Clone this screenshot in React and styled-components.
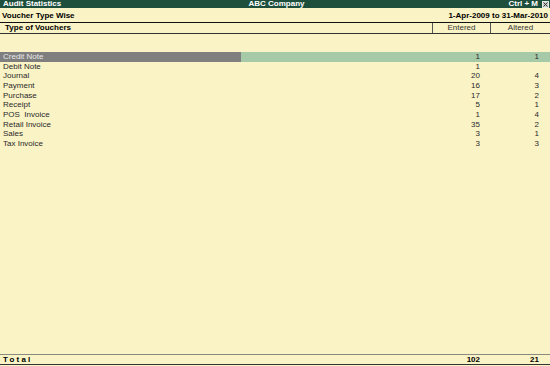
import styled, { createGlobalStyle } from "styled-components";

const GlobalStyle = createGlobalStyle`
  html, body {
    margin: 0;
    padding: 0;
    background: #faf3c6;
  }
  body {
    font-family: "Liberation Sans", Arial, sans-serif;
  }
`;

const Screen = styled.div`
  width: 550px;
  height: 366px;
  display: flex;
  flex-direction: column;
  background: #faf3c6;
  color: #222;
  overflow: hidden;
`;

const TitleBar = styled.div`
  height: 8px;
  display: grid;
  grid-template-columns: 1fr auto 1fr;
  align-items: center;
  background: #1e4e3c;
  color: #fff;
  font-size: 8px;
  font-weight: bold;
  line-height: 8px;
  padding-left: 3px;

  & .right {
    display: flex;
    justify-content: flex-end;
    align-items: center;
    gap: 4px;
  }
`;

const CloseBox = styled.span`
  width: 7px;
  height: 7px;
  margin-right: 1px;
  background: #c8cfc8;
  border: 1px solid #e8ece8;
  box-sizing: border-box;
  display: flex;
  align-items: center;
  justify-content: center;
`;

const SubTitle = styled.div`
  height: 14px;
  display: flex;
  justify-content: space-between;
  align-items: center;
  padding: 0 2px 0 2px;
  font-size: 8px;
  font-weight: bold;
  color: #000;
  border-bottom: 1.5px solid #111;
`;

const HeadRow = styled.div`
  display: grid;
  grid-template-columns: 1fr 58px 60px;
  height: 10px;
  border-bottom: 1px solid #333;
  font-size: 8px;
  line-height: 10px;
`;

const HeadCell = styled.div`
  text-align: ${(p) => (p.$left ? "left" : "center")};
  padding-left: ${(p) => (p.$left ? "5px" : "0")};
  font-weight: ${(p) => (p.$left ? "bold" : "normal")};
  color: ${(p) => (p.$left ? "#000" : "#333")};
  border-left: ${(p) => (p.$left ? "none" : "1px solid #555")};
`;

const Body = styled.div`
  flex: 1;
  padding-top: 18px;
`;

const Row = styled.div`
  display: grid;
  grid-template-columns: 1fr 58px 60px;
  height: 9.67px;
  font-size: 8px;
  line-height: 9.67px;
  color: #2a2a2a;
  background: ${(p) => (p.$active ? "#a6c9a8" : "transparent")};
`;

const Name = styled.div`
  white-space: pre;

  & > span {
    display: block;
    padding-left: 3px;
  }

  & .hl {
    width: 238px;
    background: #7f7f7f;
    color: #e8e8e8;
  }
`;

const Num = styled.div`
  text-align: right;
  padding-right: ${(p) => p.$pad}px;
`;

const TotalRow = styled.div`
  display: grid;
  grid-template-columns: 1fr 58px 60px;
  height: 9px;
  border-top: 1.5px solid #8a8a80;
  border-bottom: 1.5px solid #333;
  margin-bottom: 1px;
  font-size: 8px;
  line-height: 9px;
  font-weight: bold;
  color: #000;

  & .label {
    padding-left: 3px;
    letter-spacing: 2.2px;
  }
`;

const rows = [
  ["Credit Note", "1", "1"],
  ["Debit Note", "1", ""],
  ["Journal", "20", "4"],
  ["Payment", "16", "3"],
  ["Purchase", "17", "2"],
  ["Receipt", "5", "1"],
  ["POS  Invoice", "1", "4"],
  ["Retail Invoice", "35", "2"],
  ["Sales", "3", "1"],
  ["Tax Invoice", "3", "3"],
];

export default function App() {
  return (
    <>
      <GlobalStyle />
      <Screen>
        <TitleBar>
          <span>Audit Statistics</span>
          <span>ABC Company</span>
          <span className="right">
            Ctrl + M
            <CloseBox>
              <svg width="5" height="5" viewBox="0 0 5 5">
                <path d="M0.5 0.5L4.5 4.5M4.5 0.5L0.5 4.5" stroke="#333" strokeWidth="1" />
              </svg>
            </CloseBox>
          </span>
        </TitleBar>
        <SubTitle>
          <span>Voucher Type Wise</span>
          <span>1-Apr-2009 to 31-Mar-2010</span>
        </SubTitle>
        <HeadRow>
          <HeadCell $left>Type of Vouchers</HeadCell>
          <HeadCell>Entered</HeadCell>
          <HeadCell>Altered</HeadCell>
        </HeadRow>
        <Body>
          {rows.map((r, i) => (
            <Row key={i} $active={i === 0}>
              <Name>
                <span className={i === 0 ? "hl" : undefined}>{r[0]}</span>
              </Name>
              <Num $pad={10}>{r[1]}</Num>
              <Num $pad={11}>{r[2]}</Num>
            </Row>
          ))}
        </Body>
        <TotalRow>
          <span className="label">Total</span>
          <Num $pad={10}>102</Num>
          <Num $pad={11}>21</Num>
        </TotalRow>
      </Screen>
    </>
  );
}
